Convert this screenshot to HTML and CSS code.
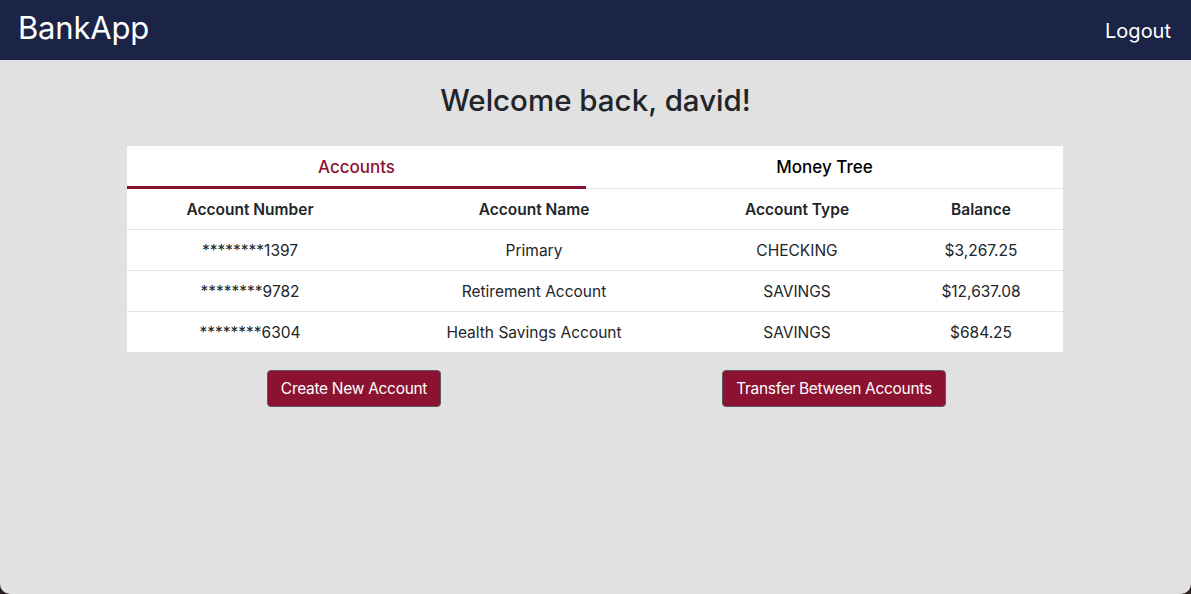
FILE: index.html
```html
<!DOCTYPE html>
<html>
<head>
<meta charset="utf-8">
<link rel="stylesheet" href="styles.css">
</head>
<body>
<div class="window">
  <header class="navbar">
    <div class="brand">BankApp</div>
    <a class="logout">Logout</a>
  </header>
  <main class="main">
    <h1 class="title">Welcome back, david!</h1>
    <section class="card">
      <div class="tabs">
        <div class="tab active">Accounts</div>
        <div class="tab">Money Tree</div>
      </div>
      <table class="accounts">
        <colgroup>
          <col class="c1"><col class="c2"><col class="c3"><col class="c4">
        </colgroup>
        <thead>
          <tr><th>Account Number</th><th>Account Name</th><th>Account Type</th><th>Balance</th></tr>
        </thead>
        <tbody>
          <tr><td>********1397</td><td>Primary</td><td>CHECKING</td><td>$3,267.25</td></tr>
          <tr><td>********9782</td><td>Retirement Account</td><td>SAVINGS</td><td>$12,637.08</td></tr>
          <tr><td>********6304</td><td>Health Savings Account</td><td>SAVINGS</td><td>$684.25</td></tr>
        </tbody>
      </table>
    </section>
    <div class="actions">
      <div class="action"><button class="btn">Create New Account</button></div>
      <div class="action"><button class="btn">Transfer Between Accounts</button></div>
    </div>
  </main>
</div>
</body>
</html>
```
FILE: styles.css
```css
html, body {
  margin: 0;
  padding: 0;
  height: 100%;
  background: #2a2220;
}
body {
  font-family: Inter, "Noto Sans", sans-serif;
  color: #212529;
}
.window {
  height: 100%;
  background: #e1e1e1;
  border-radius: 0 0 10px 10px;
  overflow: hidden;
  display: flex;
  flex-direction: column;
}
.navbar {
  height: 60px;
  background: #1b2447;
  display: flex;
  align-items: center;
  justify-content: space-between;
  padding: 0 20px 0 18px;
  color: #fff;
  flex-shrink: 0;
}
.brand {
  font-size: 31px;
  font-weight: 400;
  letter-spacing: -0.2px;
  margin-top: -5px;
}
.logout {
  font-size: 20px;
  color: #fff;
  margin-top: 1px;
}
.main {
  display: flex;
  flex-direction: column;
  align-items: center;
}
.title {
  font-size: 29.5px;
  font-weight: 500;
  margin: 21px 0 0;
  height: 65px;
  line-height: 38px;
  color: #212529;
}
.card {
  width: 936px;
  background: #fff;
  margin-left: -1px;
}
.tabs {
  display: grid;
  grid-template-columns: 459px 1fr;
  border-bottom: 1px solid #dee2e6;
}
.tab {
  box-sizing: border-box;
  height: 43px;
  padding-top: 2px;
  display: flex;
  align-items: center;
  justify-content: center;
  font-size: 17px;
  font-weight: 500;
  color: #000;
  border-bottom: 3px solid transparent;
  margin-bottom: -1px;
}
.tab.active {
  color: #8b1230;
  border-bottom-color: #8b1230;
}
.accounts {
  width: 100%;
  border-collapse: collapse;
  table-layout: fixed;
}
.c1 { width: 246px; }
.c2 { width: 322px; }
.c3 { width: 204px; }
.c4 { width: 164px; }
.accounts th, .accounts td {
  height: 40px;
  padding: 0;
  text-align: center;
  font-size: 15.5px;
  border-bottom: 1px solid #dee2e6;
  color: #212529;
}
.accounts th {
  font-weight: 600;
}
.accounts tbody tr:last-child td {
  border-bottom: none;
}
.actions {
  width: 960px;
  display: grid;
  grid-template-columns: 1fr 1fr;
  margin-top: 18px;
  margin-left: -3px;
}
.action {
  display: flex;
  justify-content: center;
}
.btn {
  font-family: Inter, "Noto Sans", sans-serif;
  font-size: 15.5px;
  color: #fff;
  background: #8b1230;
  border: 1px solid #5a5a60;
  border-radius: 4px;
  height: 37px;
  padding: 0 13px;
  letter-spacing: -0.3px;
}
```
